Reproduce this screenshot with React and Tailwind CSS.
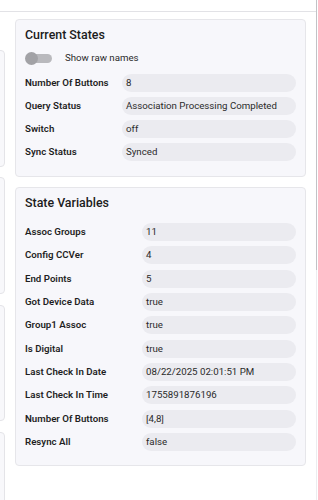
import React from "react";

const currentStates = [
  ["Number Of Buttons", "8"],
  ["Query Status", "Association Processing Completed"],
  ["Switch", "off"],
  ["Sync Status", "Synced"],
];

const stateVariables = [
  ["Assoc Groups", "11"],
  ["Config CCVer", "4"],
  ["End Points", "5"],
  ["Got Device Data", "true"],
  ["Group1 Assoc", "true"],
  ["Is Digital", "true"],
  ["Last Check In Date", "08/22/2025 02:01:51 PM"],
  ["Last Check In Time", "1755891876196"],
  ["Number Of Buttons", "[4,8]"],
  ["Resync All", "false"],
];

// une ligne label / valeur
const Row = ({ label, value, labelWidth }) => (
  <div className="flex items-center h-[18px] shrink-0">
    <div
      className={`${labelWidth} shrink-0 text-[9.7px] font-semibold text-[#1f1f1f] leading-[18px]`}
    >
      {label}
    </div>
    <div className="flex-1 h-[18px] rounded-[9px] bg-[#ebebf0] pl-[4px] text-[9.7px] leading-[18px] text-[#2a2a2a] truncate">
      {value}
    </div>
  </div>
);

const SideCard = ({ h, mt }) => (
  <div
    className={`${h} ${mt} shrink-0 w-[40px] -ml-[35px] rounded-r-[4px] border border-[#e4e4e8] bg-[#f8f8fb]`}
  />
);

export default function App() {
  return (
    <div className="w-[318px] h-[500px] bg-white flex overflow-hidden font-['Roboto',sans-serif]">
      <div className="w-[316px] shrink-0 flex flex-col">
        <div className="h-[12px] shrink-0 border-b border-[#e2e2e6]" />
        <div className="flex flex-1 min-h-0 overflow-hidden">
          {/* colonne de gauche coupée */}
          <div className="w-[5px] shrink-0 overflow-hidden flex flex-col">
            <SideCard h="h-[117px]" mt="mt-[38px]" />
            <SideCard h="h-[117px]" mt="mt-[10px]" />
            <SideCard h="h-[116px]" mt="mt-[11px]" />
            <SideCard h="h-[80px]" mt="mt-[11px]" />
          </div>

          <div className="ml-[10px] w-[291px] shrink-0 flex flex-col">
            {/* Current States */}
            <div className="mt-[7px] h-[158px] shrink-0 rounded-[4px] border border-[#e6e6ea] bg-[#f7f7fb] pl-[9px] pr-[9px]">
              <div className="mt-[7px] h-[16px] leading-[16px] text-[12.4px] font-medium text-[#1c1c1c]">
                Current States
              </div>
              <div className="mt-[7px] h-[16px] flex items-center">
                <div className="relative w-[27px] h-[13px] flex items-center">
                  <div className="ml-[2px] w-[25px] h-[9px] rounded-full bg-[#b9b9bd]" />
                  <div className="absolute left-0 top-0 w-[13px] h-[13px] rounded-full bg-[#a2a2a6]" />
                </div>
                <span className="ml-[13px] text-[9.7px] text-[#2a2a2a]">
                  Show raw names
                </span>
              </div>
              <div className="mt-[8px] flex flex-col gap-[5px]">
                {currentStates.map(([l, v]) => (
                  <Row key={l} label={l} value={v} labelWidth="w-[97px]" />
                ))}
              </div>
            </div>

            {/* State Variables */}
            <div className="mt-[10px] h-[279px] shrink-0 rounded-[4px] border border-[#e6e6ea] bg-[#f7f7fb] pl-[9px] pr-[9px]">
              <div className="mt-[6.5px] h-[16px] leading-[16px] text-[12.4px] font-medium text-[#1c1c1c]">
                State Variables
              </div>
              <div className="mt-[12.5px] flex flex-col gap-[5.33px]">
                {stateVariables.map(([l, v]) => (
                  <Row key={l} label={l} value={v} labelWidth="w-[117px]" />
                ))}
              </div>
            </div>
          </div>
        </div>
      </div>
      {/* barre de défilement */}
      <div className="w-[1px] flex flex-col">
        <div className="h-[270px] bg-[#c2c2c6]" />
        <div className="flex-1 bg-[#ececef]" />
      </div>
      <div className="w-[1px] bg-white" />
    </div>
  );
}
